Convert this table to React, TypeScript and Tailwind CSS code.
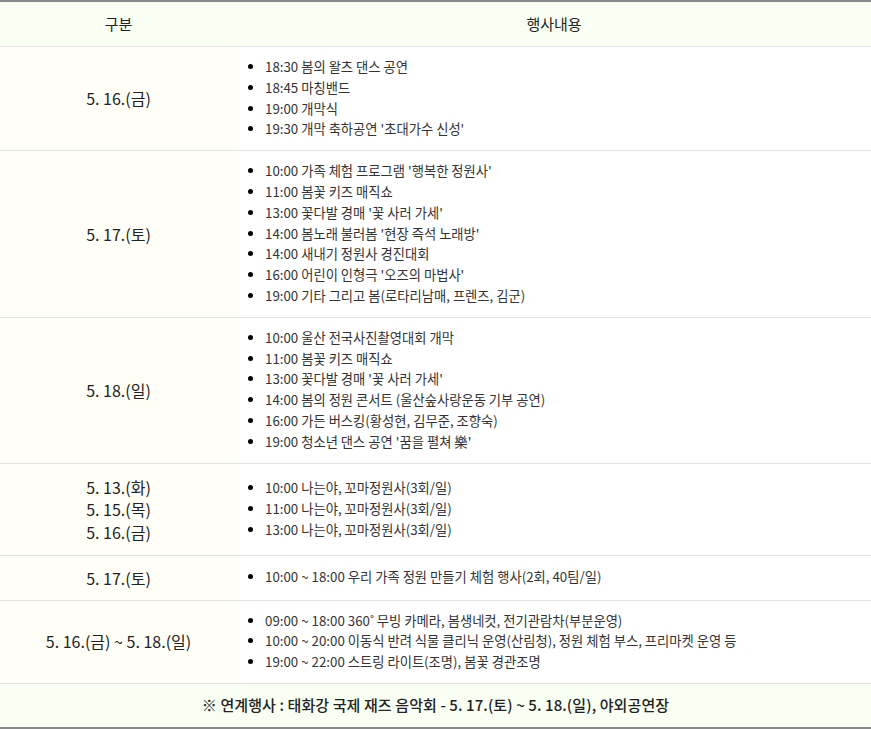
const rows: { dates: string[]; items: string[]; datePad?: string }[] = [
  {
    dates: ['5. 16.(금)'],
    items: ['18:30 봄의 왈츠 댄스 공연', '18:45 마칭밴드', '19:00 개막식', "19:30 개막 축하공연 '초대가수 신성'"],
  },
  {
    dates: ['5. 17.(토)'],
    items: [
      "10:00 가족 체험 프로그램 '행복한 정원사'",
      '11:00 봄꽃 키즈 매직쇼',
      "13:00 꽃다발 경매 '꽃 사러 가세'",
      "14:00 봄노래 불러봄 '현장 즉석 노래방'",
      '14:00 새내기 정원사 경진대회',
      "16:00 어린이 인형극 '오즈의 마법사'",
      '19:00 기타 그리고 봄(로타리남매, 프렌즈, 김군)',
    ],
  },
  {
    dates: ['5. 18.(일)'],
    items: [
      '10:00 울산 전국사진촬영대회 개막',
      '11:00 봄꽃 키즈 매직쇼',
      "13:00 꽃다발 경매 '꽃 사러 가세'",
      '14:00 봄의 정원 콘서트 (울산숲사랑운동 기부 공연)',
      '16:00 가든 버스킹(황성현, 김무준, 조향숙)',
      "19:00 청소년 댄스 공연 '꿈을 펼쳐 樂'",
    ],
  },
  {
    dates: ['5. 13.(화)', '5. 15.(목)', '5. 16.(금)'],
    items: ['10:00 나는야, 꼬마정원사(3회/일)', '11:00 나는야, 꼬마정원사(3회/일)', '13:00 나는야, 꼬마정원사(3회/일)'],
    datePad: 'py-[12px]',
  },
  {
    dates: ['5. 17.(토)'],
    items: ['10:00 ~ 18:00 우리 가족 정원 만들기 체험 행사(2회, 40팀/일)'],
    datePad: 'py-[10.5px]',
  },
  {
    dates: ['5. 16.(금) ~ 5. 18.(일)'],
    items: [
      '09:00 ~ 18:00 360˚ 무빙 카메라, 봄생네컷, 전기관람차(부분운영)',
      '10:00 ~ 20:00 이동식 반려 식물 클리닉 운영(산림청), 정원 체험 부스, 프리마켓 운영 등',
      '19:00 ~ 22:00 스트링 라이트(조명), 봄꽃 경관조명',
    ],
  },
]

export default function App() {
  return (
    <div
      className="w-[871px] h-[730px] bg-white text-[#222]"
      style={{ fontFamily: '"Noto Sans CJK KR", "Noto Sans", sans-serif' }}
    >
      <div className="border-t-2 border-b-2 border-[#888]">
        <div className="grid grid-cols-[237px_1fr] h-[45px] bg-[#f9fff2] border-b border-[#e3e3e3] text-[15px] leading-[20px]">
          <div className="flex items-center justify-center">구분</div>
          <div className="flex items-center justify-center">행사내용</div>
        </div>

        {rows.map((row, i) => (
          <div key={i} className="grid grid-cols-[237px_1fr] border-b border-[#e3e3e3]">
            <div
              className={`flex flex-col items-center justify-center bg-[#fffff7] text-[16px] leading-[22.5px] ${row.datePad ?? 'py-[10px]'}`}
            >
              {row.dates.map((d) => (
                <div key={d}>{d}</div>
              ))}
            </div>
            <div className="flex items-center px-[10px] py-[10px]">
              <ul className="list-disc pl-[18px] text-[13.3px] leading-[20.8px] text-[#333] marker:text-black">
                {row.items.map((it) => (
                  <li key={it}>{it}</li>
                ))}
              </ul>
            </div>
          </div>
        ))}

        <div className="flex items-center justify-center h-[43px] bg-[#f9fff2] text-[15px] tracking-[0.1px] font-medium">
          ※ 연계행사 : 태화강 국제 재즈 음악회 - 5. 17.(토) ~ 5. 18.(일), 야외공연장
        </div>
      </div>
    </div>
  )
}
